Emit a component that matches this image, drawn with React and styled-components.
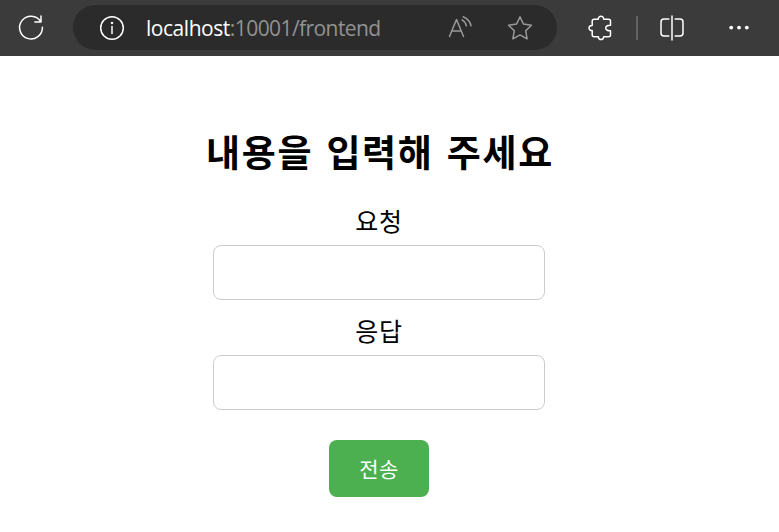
import React from 'react';
import styled, { createGlobalStyle } from 'styled-components';

const GlobalStyle = createGlobalStyle`
  * { box-sizing: border-box; }
  body {
    margin: 0;
    background: #fff;
    color: #000;
    font-family: "Noto Sans CJK KR", sans-serif;
    overflow: hidden;
  }
`;

const Toolbar = styled.header`
  display: flex;
  align-items: center;
  height: 56px;
  padding: 0 25px 1px 17px;
  background: #3b3b3b;
  color: #fff;
`;

const Icon = styled.svg`
  display: block;
  flex: none;
  width: 28px;
  height: 28px;
  margin-left: ${(p) => p.$gap || 0}px;
  fill: none;
  stroke: ${(p) => (p.$muted ? '#9a9a9a' : '#fff')};
  stroke-width: 1.5;
  stroke-linecap: round;
  stroke-linejoin: round;
`;

const AddressBar = styled.div`
  display: flex;
  align-items: center;
  width: 484px;
  height: 45px;
  margin-left: 28px;
  padding: 0 23px 0 25px;
  border-radius: 23px;
  background: #2b2b2b;
`;

const Url = styled.span`
  flex: 1;
  margin-left: 20px;
  font: 21px/30px "Open Sans", sans-serif;
  letter-spacing: -0.58px;
  color: #929292;
  white-space: nowrap;
`;

const Host = styled.span`
  color: #fff;
  letter-spacing: -0.46px;
`;

const Divider = styled.span`
  width: 2px;
  height: 24px;
  margin-left: 21px;
  background: #626262;
`;

const Form = styled.form`
  display: flex;
  flex-direction: column;
  align-items: center;
  width: 758px;
  padding-top: 72px;
`;

const Title = styled.h1`
  height: 48px;
  margin: 0 0 23px;
  padding-left: 2px;
  font-size: 37px;
  line-height: 46px;
  font-weight: 700;
  letter-spacing: 1.7px;
  word-spacing: 3px;
  white-space: nowrap;
`;

const Field = styled.label`
  display: flex;
  flex-direction: column;
  align-items: center;
  width: 332px;
  height: 101px;
  margin-bottom: 9px;
`;

const FieldName = styled.span`
  flex: none;
  height: 46px;
  font-size: 25px;
  line-height: 42px;
  letter-spacing: 0.8px;
`;

const Input = styled.input`
  width: 332px;
  height: 55px;
  padding: 0 15px;
  border: 1px solid #ccc;
  border-radius: 8px;
  background: #fff;
  font: inherit;
  outline: none;
`;

const Submit = styled.button`
  width: 100px;
  height: 57px;
  margin-top: 21px;
  padding: 0;
  border: 0;
  border-radius: 8px;
  background: #4caf50;
  color: #fff;
  font: 21px/57px "Noto Sans CJK KR", sans-serif;
  letter-spacing: 0.5px;
`;

const RefreshIcon = () => (
  <Icon viewBox="0 0 28 28">
    <path d="M23.6 7.4A11.4 11.4 0 1 0 25.4 13.2M24 1.9v6.1h-6.1" />
  </Icon>
);

const InfoIcon = () => (
  <Icon viewBox="0 0 28 28">
    <circle cx="14" cy="14" r="11.3" />
    <path d="M14 12.5v7" />
    <circle cx="14" cy="9" r=".5" />
  </Icon>
);

const ReadAloudIcon = () => (
  <Icon viewBox="0 0 28 28" $muted>
    <path d="M3.5 22.5 10.5 5.5 17.5 22.5M5.9 17h9.2M16.1 5.8q3.5 2 4.2 6M17.2 2.8q6.6 3 7.8 9" />
  </Icon>
);

const StarIcon = () => (
  <Icon viewBox="0 0 28 28" $muted $gap={32}>
    <path d="m14 2.9 3.4 7.1 8.1 1.2-5.8 5.5 1.4 8.1-7.1-3.9-7.1 3.9 1.4-8.1-5.8-5.5 8.1-1.2Z" />
  </Icon>
);

const PuzzleIcon = () => (
  <Icon viewBox="0 0 28 28" $gap={30}>
    <path d="M7.2 5.2h4.1c-.2-4 5.6-4 5.4 0h4.8q2 0 2 2v4.1c-6.4-.5-6.4 5.9 0 5.4v4.1q0 2-2 2h-4.9c.2 3.6-5.4 3.6-5.2 0H7.2q-2 0-2-2v-4.2c-4.2.2-4.2-5.4 0-5.2V7.2q0-2 2-2Z" />
  </Icon>
);

const SplitIcon = () => (
  <Icon viewBox="0 0 28 28" $gap={20}>
    <path d="M14 2v24M10.8 5H6Q3 5 3 8v11q0 3 3 3h4.8M17.2 5H22q3 0 3 3v11q0 3-3 3h-4.8" />
  </Icon>
);

const MoreIcon = () => (
  <Icon viewBox="0 0 28 28" $gap={39}>
    <g fill="#fff" stroke="none">
      <circle cx="6.2" cy="13.6" r="1.9" />
      <circle cx="14" cy="13.6" r="1.9" />
      <circle cx="21.8" cy="13.6" r="1.9" />
    </g>
  </Icon>
);

export default function App() {
  return (
    <>
      <GlobalStyle />
      <Toolbar>
        <RefreshIcon />
        <AddressBar>
          <InfoIcon />
          <Url><Host>localhost</Host>:10001/frontend</Url>
          <ReadAloudIcon />
          <StarIcon />
        </AddressBar>
        <PuzzleIcon />
        <Divider />
        <SplitIcon />
        <MoreIcon />
      </Toolbar>
      <Form onSubmit={(e) => e.preventDefault()}>
        <Title>내용을 입력해 주세요</Title>
        <Field>
          <FieldName>요청</FieldName>
          <Input type="text" />
        </Field>
        <Field>
          <FieldName>응답</FieldName>
          <Input type="text" />
        </Field>
        <Submit type="submit">전송</Submit>
      </Form>
    </>
  );
}
